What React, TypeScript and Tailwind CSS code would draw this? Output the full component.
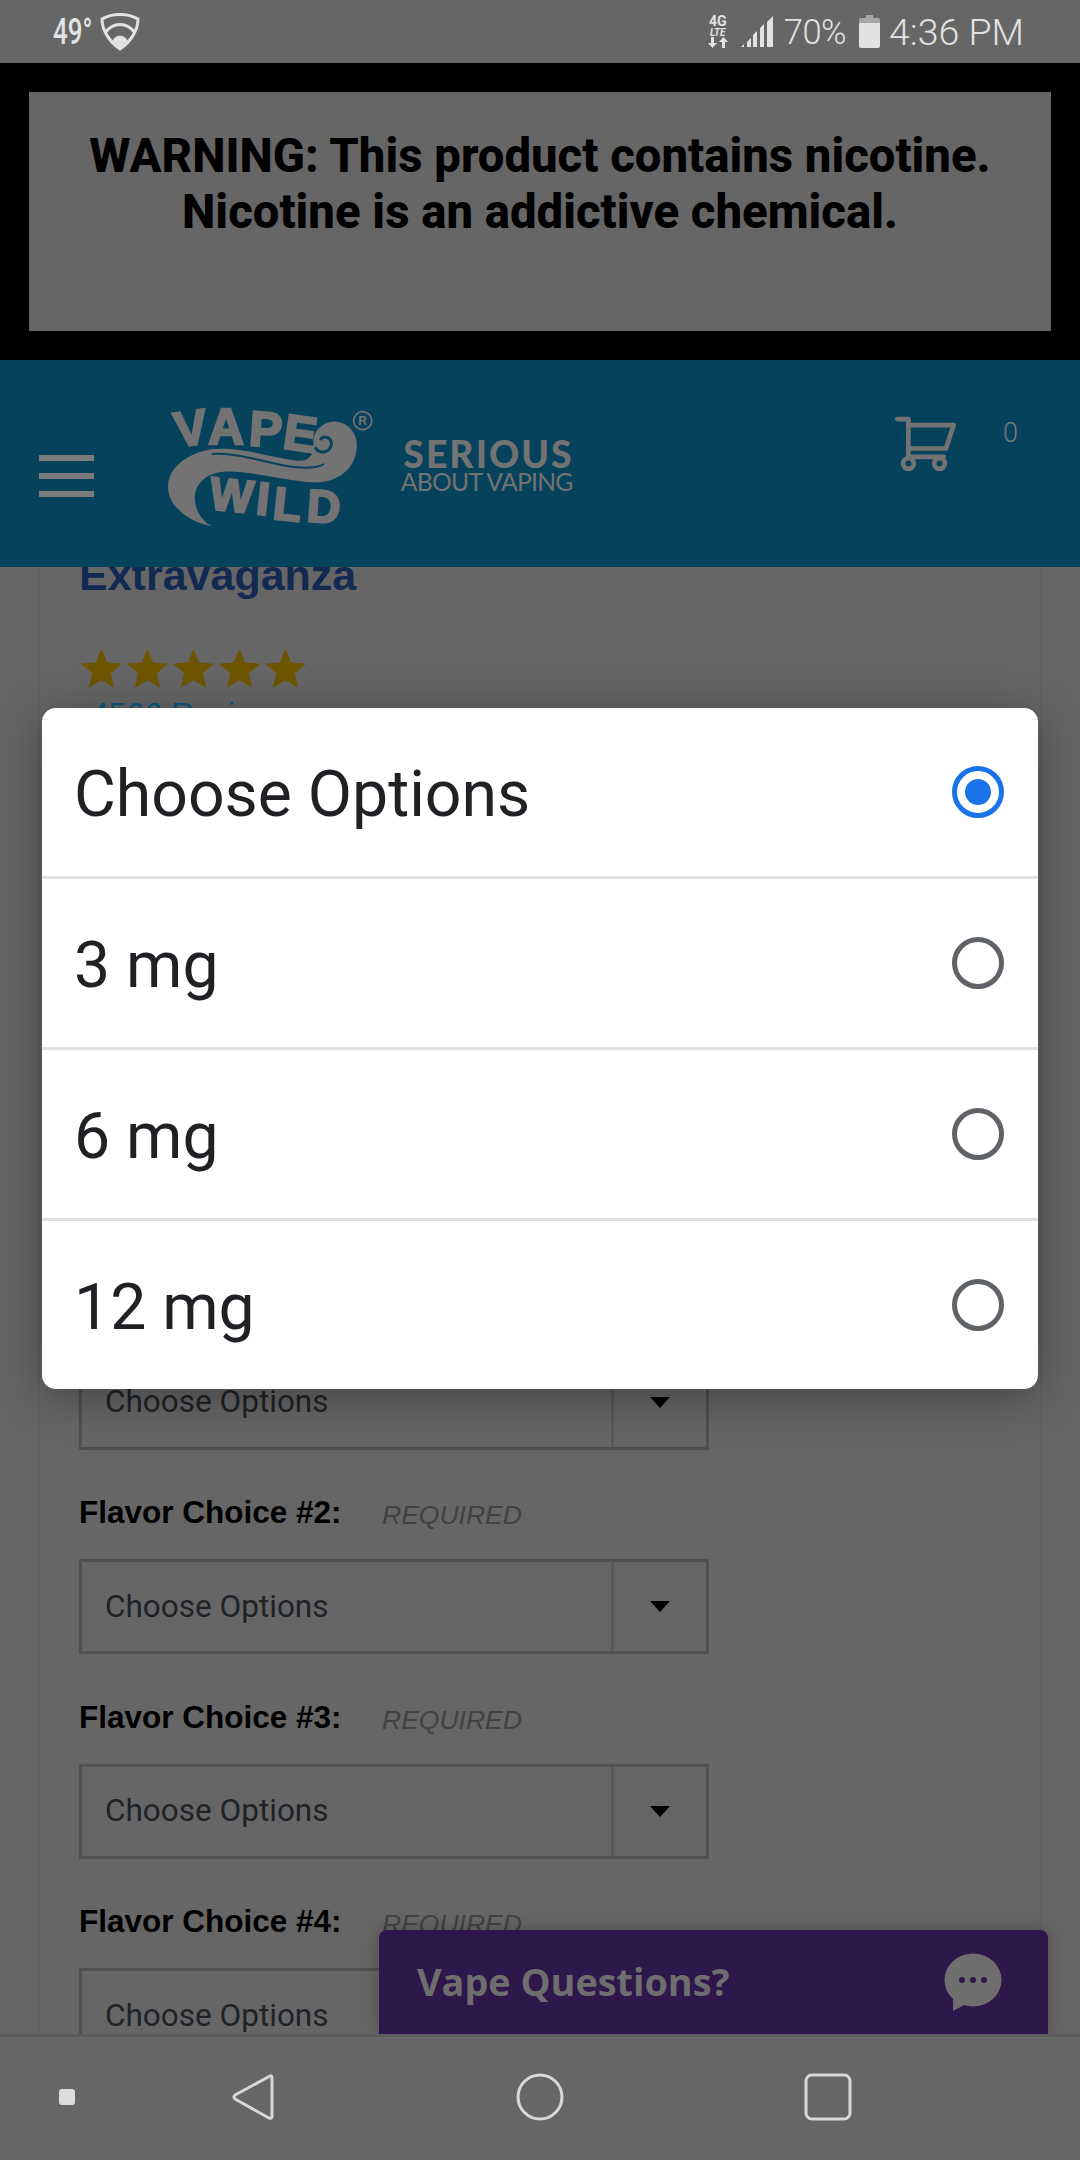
import React from 'react';

const FLAVORS = [2, 3, 4];
const OPTIONS = ['Choose Options', '3 mg', '6 mg', '12 mg'];

function SelectBox() {
  return (
    <div className="flex h-[95px] w-[630px] border-[3px] border-[#505050] font-['Roboto',sans-serif] text-[31.5px] text-[#1f2226]">
      <div className="flex flex-1 items-center pl-[23px]">Choose Options</div>
      <div className="flex w-[95px] items-center justify-center border-l-[3px] border-[#585858]">
        <div className="h-0 w-0 border-x-[10px] border-t-[11px] border-x-transparent border-t-black" />
      </div>
    </div>
  );
}

function FlavorRow({ n }: { n: number }) {
  return (
    <div className="mt-[37.5px]">
      <div className="flex h-[72px] items-start pt-[5px] font-['Liberation_Sans',sans-serif]">
        <span className="w-[303px] text-[31.5px] leading-[40px] font-bold text-black">Flavor Choice #{n}:</span>
        <span className="mt-[3px] text-[26.5px] leading-[40px] text-[#424242] italic">REQUIRED</span>
      </div>
      <SelectBox />
    </div>
  );
}

// coordinates follow the logo artwork, 3 units to a pixel
function Logo() {
  return (
    <svg width="440" height="140" viewBox="60 30 1320 420" className="mt-[40px] ml-[66px] shrink-0">
      <g fill="#737373">
        <path d="M215 408C150 398 84 350 84 290C84 235 140 190 215 178C300 168 400 205 470 212C500 216 525 200 520 160C518 120 555 92 590 95C630 100 655 135 650 175C645 240 590 280 520 277C430 272 330 240 250 245C190 250 160 290 165 335C170 370 190 395 215 408Z" />
        <path d="M215 192C300 186 400 226 470 232C505 235 535 232 552 222" fill="none" stroke="#07425c" strokeWidth="6" />
        <path d="M525 172C538 195 572 188 574 162C575 142 550 134 541 150" fill="none" stroke="#07425c" strokeWidth="9" />
        <g fontFamily="'Liberation Sans', sans-serif" fontWeight="700" stroke="#737373" strokeWidth="7">
          <text x="110 205 325 425" y="172 162 166 174" rotate="-8 0 4 8" fontSize="148">VAPE</text>
          <text x="205 345 395 498" y="356 372 386 394" rotate="6 6 6 4" fontSize="138">WILD</text>
        </g>
        <circle cx="668" cy="92" r="27" fill="none" stroke="#737373" strokeWidth="5" />
        <text x="668" y="105" fontFamily="'Liberation Sans', sans-serif" fontSize="36" fontWeight="700" textAnchor="middle">R</text>
        <g fontFamily="Lato, sans-serif">
          <text x="790" y="235" fontSize="112" fontWeight="900" textLength="505" lengthAdjust="spacing">SERIOUS</text>
          <text x="782" y="303" fontSize="74" fontWeight="400" textLength="518" lengthAdjust="spacing">ABOUT VAPING</text>
        </g>
      </g>
    </svg>
  );
}

export default function App() {
  return (
    <div className="relative flex h-[2160px] w-[1080px] flex-col overflow-hidden bg-[#666666]">
      {/* status bar */}
      <div className="flex h-[63px] items-center justify-between pr-[56px] pl-[53px] font-['Roboto',sans-serif] text-[#e2e2e2]">
        <div className="flex items-center gap-[8px]">
          <span className="w-[39px] origin-left scale-x-[0.7] text-[37px] leading-none font-medium whitespace-nowrap">49°</span>
          <svg width="40" height="38" viewBox="0 0 40 38" fill="none" stroke="#e2e2e2" strokeWidth="3" strokeLinejoin="round">
            <path d="M2 6C12 0 28 0 38 6C38 18 30 29 20 36C10 29 2 18 2 6Z" />
            <path d="M6 19C13 9 27 9 34 19" />
            <path d="M12 28C16 21 24 21 28 28L20 35Z" fill="#e2e2e2" stroke="none" />
          </svg>
        </div>
        <div className="flex items-center">
          <div className="flex w-[24px] flex-col items-center font-bold">
            <span className="text-[14px] leading-[13px]">4G</span>
            <span className="text-[10px] leading-[9px] italic">LTE</span>
            <svg width="22" height="11" viewBox="0 0 22 11" fill="#e2e2e2">
              <path d="M4 0h3v6h3l-4.500 5L1 6h3zM15 11h3V5h3l-4.500-5L12 5h3z" />
            </svg>
          </div>
          <svg width="32" height="31" viewBox="0 0 32 31" fill="#e2e2e2" className="ml-[11px]">
            <path d="M0 31h3v-3zM6 31h4v-9l-4 4zM12 31h4V15l-4 4zM19 31h4V8l-4 4zM26 31h6V0l-6 6z" />
          </svg>
          <span className="mt-[2px] ml-[11px] text-[34.5px] leading-none font-light tracking-[-0.5px]">70%</span>
          <svg width="21" height="33" viewBox="0 0 21 33" className="ml-[13px]">
            <path d="M7 0h7v3h5a2 2 0 0 1 2 2v4H0V5a2 2 0 0 1 2-2h5z" fill="#a6a6a6" />
            <path d="M0 8h21v23a2 2 0 0 1-2 2H2a2 2 0 0 1-2-2z" fill="#e2e2e2" />
          </svg>
          <span className="mt-[3px] ml-[9px] text-[37.5px] leading-none font-light">4:36 PM</span>
        </div>
      </div>

      {/* nicotine warning */}
      <div className="h-[297px] bg-black p-[29px]">
        <div className="h-[239px] bg-[#666666] pt-[36px] text-center font-['Roboto',sans-serif] text-[47.3px] leading-[56px] font-extrabold text-black">
          WARNING: This product contains nicotine.
          <br />
          Nicotine is an addictive chemical.
        </div>
      </div>

      {/* site header */}
      <div className="relative z-10 flex h-[207px] items-start bg-[#07425c] pl-[39px]">
        <div className="mt-[95px] flex w-[55px] shrink-0 flex-col gap-[12px]">
          <div className="h-[6px] bg-[#7a7a7a]" />
          <div className="h-[6px] bg-[#7a7a7a]" />
          <div className="h-[6px] bg-[#7a7a7a]" />
        </div>
        <Logo />
        <svg width="62" height="57" viewBox="45 40 185 170" fill="none" stroke="#737373" strokeWidth="14" strokeLinejoin="round" strokeLinecap="round" className="mt-[55px] ml-[295px] shrink-0">
          <path d="M52 52H85V165H190" />
          <path d="M85 70H220L197 140H85" />
          <circle cx="85" cy="185" r="16" />
          <circle cx="178" cy="185" r="16" />
        </svg>
        <span className="mt-[56px] ml-[46px] font-['Roboto',sans-serif] text-[27px] leading-[34px] font-light text-[#787878]">0</span>
      </div>

      {/* product page */}
      <div className="mx-[38px] min-h-0 flex-1 overflow-hidden border-x-2 border-[#626262] pl-[39px]">
        <div className="-mt-[17px] font-['Liberation_Sans',sans-serif] text-[43px] leading-[50px] font-bold text-[#122a52]">Extravaganza</div>
        <div className="mt-[47px] ml-[1px] flex h-[43px] gap-[3px] text-[#6e5600]">
          {[0, 1, 2, 3, 4].map((i) => (
            <svg key={i} width="43" height="43" viewBox="0 0 24 24" fill="currentColor">
              <path d="M12 1l3.200 7.600 8.300.7-6.300 5.400 1.900 8.100L12 18.600l-7.100 4.200 1.900-8.100L.5 9.300l8.300-.7z" />
            </svg>
          ))}
        </div>
        <div className="mt-[6px] ml-[12px] font-['Liberation_Sans',sans-serif] text-[32px] leading-[36px] text-[#0a5a80]">4566 Reviews</div>
        <div className="mt-[622.5px]">
          <SelectBox />
        </div>
        {FLAVORS.map((n) => (
          <FlavorRow key={n} n={n} />
        ))}
      </div>

      {/* android nav */}
      <div className="z-10 flex h-[126px] items-center border-t-[3px] border-[#5d5d5d] bg-[#666666] pb-[3px] pl-[59px]">
        <div className="h-[16px] w-[16px] rounded-[3px] bg-[#dcdcdc]" />
        <svg width="42" height="48" viewBox="0 0 42 48" fill="none" stroke="#d8d8d8" strokeWidth="3" className="ml-[157px]">
          <path d="M38 3Q40 2 40 5V43Q40 46 37 45L3 26Q1 24 3 22Z" strokeLinejoin="round" />
        </svg>
        <svg width="48" height="48" viewBox="0 0 48 48" fill="none" stroke="#d8d8d8" strokeWidth="3" className="ml-[242px]">
          <circle cx="24" cy="24" r="22" />
        </svg>
        <svg width="48" height="48" viewBox="0 0 48 48" fill="none" stroke="#d8d8d8" strokeWidth="3" className="ml-[240px]">
          <rect x="2" y="2" width="44" height="44" rx="6" />
        </svg>
      </div>

      {/* chat widget */}
      <div className="absolute top-[1930px] left-[379px] flex h-[104px] w-[669px] items-center justify-between rounded-t-[8px] bg-[#2e174b] pr-[46px] pl-[38px] shadow-[0_0_16px_rgba(0,0,0,0.25)]">
        <span className="font-['Open_Sans',sans-serif] text-[37.8px] font-bold text-[#6e6e6e]">Vape Questions?</span>
        <svg width="58" height="58" viewBox="0 0 58 58" fill="#6e6e6e">
          <ellipse cx="29" cy="27" rx="28.500" ry="26.500" />
          <path d="M9 38V58L24 50z" />
          <circle cx="18" cy="27" r="3" fill="#2e174b" />
          <circle cx="29" cy="27" r="3" fill="#2e174b" />
          <circle cx="40" cy="27" r="3" fill="#2e174b" />
        </svg>
      </div>

      {/* options dialog */}
      <div className="absolute top-[708px] left-[42px] w-[996px] overflow-hidden rounded-[14px] bg-white font-['Roboto',sans-serif] text-[#202124] shadow-[0_8px_48px_rgba(0,0,0,0.35)]">
        {OPTIONS.map((option, i) => (
          <div key={option} className={`flex items-center justify-between pr-[34px] pl-[32px] ${i > 0 ? 'h-[171px] border-t-[3px] border-[#e0e0e0]' : 'h-[168px]'}`}>
            <span className="pt-[4px] text-[64.3px] leading-none">{option}</span>
            {i === 0 ? (
              <div className="flex h-[52px] w-[52px] items-center justify-center rounded-full border-[5px] border-[#1a73e8]">
                <div className="h-[26px] w-[26px] rounded-full bg-[#1a73e8]" />
              </div>
            ) : (
              <div className="h-[52px] w-[52px] rounded-full border-[5px] border-[#5f6368]" />
            )}
          </div>
        ))}
      </div>
    </div>
  );
}
